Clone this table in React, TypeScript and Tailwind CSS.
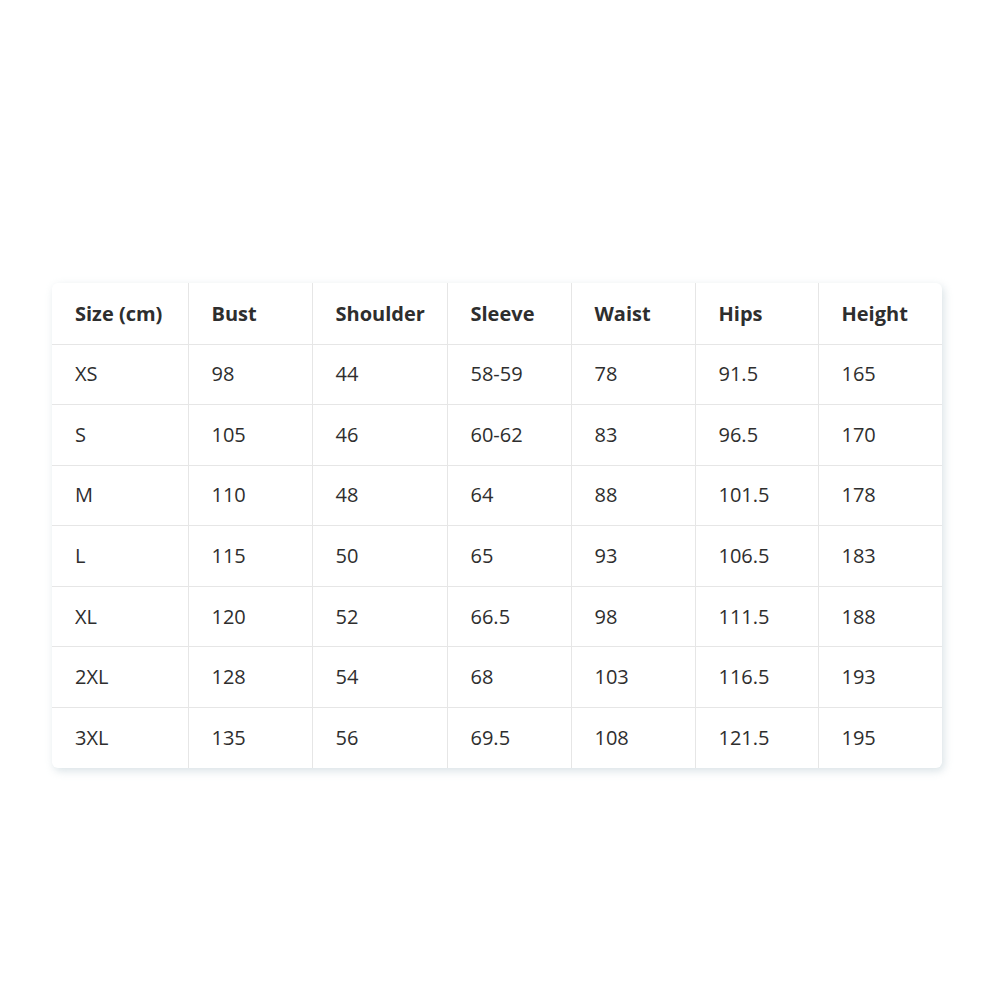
const headers = ["Size (cm)", "Bust", "Shoulder", "Sleeve", "Waist", "Hips", "Height"];

const rows = [
  ["XS", "98", "44", "58-59", "78", "91.5", "165"],
  ["S", "105", "46", "60-62", "83", "96.5", "170"],
  ["M", "110", "48", "64", "88", "101.5", "178"],
  ["L", "115", "50", "65", "93", "106.5", "183"],
  ["XL", "120", "52", "66.5", "98", "111.5", "188"],
  ["2XL", "128", "54", "68", "103", "116.5", "193"],
  ["3XL", "135", "56", "69.5", "108", "121.5", "195"],
];

const widths = ["w-[136px]", "w-[124px]", "w-[135px]", "w-[124px]", "w-[124px]", "w-[123px]", "w-[124px]"];

export default function App() {
  return (
    <main className="min-h-screen bg-white pt-[283px] pl-[52px] font-['Open_Sans',sans-serif] text-[#2e2e2e]">
      <div className="w-[890px] overflow-hidden rounded-md bg-white shadow-[2px_3px_8px_rgba(170,190,200,0.45)]">
        <table className="w-full table-fixed border-collapse text-[20px] leading-none">
          <thead>
            <tr className="h-[61px]">
              {headers.map((h, i) => (
                <th
                  key={h}
                  className={`${widths[i]} border-b border-[#e6e6e6] pt-[2px] pl-[23px] text-left font-bold ${i > 0 ? "border-l" : ""}`}
                >
                  {h}
                </th>
              ))}
            </tr>
          </thead>
          <tbody>
            {rows.map((r, ri) => (
              <tr key={r[0]} className="h-[60.6px]">
                {r.map((c, i) => (
                  <td
                    key={i}
                    className={`border-[#e6e6e6] pl-[23px] ${i > 0 ? "border-l" : ""} ${ri < rows.length - 1 ? "border-b" : ""}`}
                  >
                    {c}
                  </td>
                ))}
              </tr>
            ))}
          </tbody>
        </table>
      </div>
    </main>
  );
}
